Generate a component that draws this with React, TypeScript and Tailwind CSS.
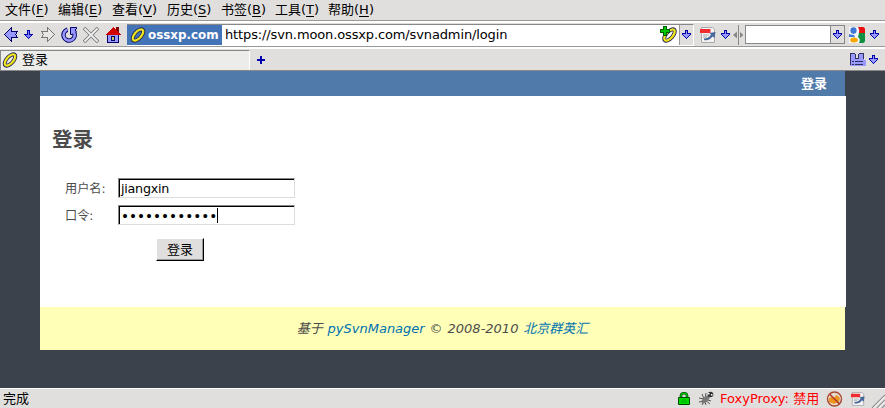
import React from 'react';

const chars = "font-['DejaVu_Sans','Noto_Sans_CJK_SC',sans-serif]";

function DownArrow() {
  return (
    <svg width="9" height="9" viewBox="0 0 9 9" shapeRendering="crispEdges">
      <path d="M3 0h3v3h3v2h-1v1h-1v1h-1v1h-1v1h-1v-1h-1v-1h-1v-1h-1v-1h-1v-2h3z" fill="#0000a8" />
      <path d="M4 1h1v3h3v1h-1v1h-1v1h-1v1h-1v-1h-1v-1h-1v-1h-1v-1h3z" fill="#9999ff" />
    </svg>
  );
}

function SmallArrow() {
  return (
    <svg width="9" height="9" viewBox="0 0 9 9" shapeRendering="crispEdges">
      <path d="M3 0h3v4h3v1h-1v1h-1v1h-1v1h-1v1h-1v-1h-1v-1h-1v-1h-1v-1h-1v-1h3z" fill="#0000a8" />
      <path d="M4 1h1v4h2v1h-1v1h-1v1h-1v-1h-1v-1h-1v-1h2z" fill="#8080ff" />
    </svg>
  );
}

function Ring() {
  return (
    <svg width="16" height="16" viewBox="0 0 16 16">
      <g transform="rotate(-48 8 8)" fill="none">
        <ellipse cx="8" cy="8" rx="7" ry="3.3" stroke="#20205a" strokeWidth="3.9" />
        <ellipse cx="8" cy="8" rx="7" ry="3.3" stroke="#e6dc00" strokeWidth="2.3" />
        <ellipse cx="8" cy="7.6" rx="6.8" ry="3.2" stroke="#ffff80" strokeWidth="0.5" />
      </g>
    </svg>
  );
}

function Back() {
  return (
    <svg width="15" height="15" viewBox="0 0 15 15" shapeRendering="crispEdges">
      <path d="M.5 7.5L7.5.5V4.5H13.5L11.5 7.5L13.5 10.5H7.5V14.5Z" fill="#9999ff" stroke="#000066" />
    </svg>
  );
}

function Forward() {
  return (
    <svg width="15" height="15" viewBox="0 0 15 15" shapeRendering="crispEdges">
      <path d="M14.5 7.5L7.5.5V4.5H1.5L3.5 7.5L1.5 10.5H7.5V14.5Z" fill="#e8e6e4" stroke="#777" />
    </svg>
  );
}

function Reload() {
  return (
    <svg width="17" height="16" viewBox="0 0 17 16">
      <path d="M6.5 2.6A5.6 5.6 0 1 0 13 5.3" fill="none" stroke="#000066" strokeWidth="4.4" />
      <path d="M9.5 .5H15.5V2L14 3L15.5 5L11 7.5H9.5Z" fill="#9999ff" stroke="#000066" />
      <path d="M6.2 2.7A5.6 5.6 0 1 0 13.2 5.6L12.5 4" fill="none" stroke="#9999ff" strokeWidth="2.5" />
    </svg>
  );
}

function Stop() {
  return (
    <svg width="16" height="16" viewBox="0 0 16 16">
      <path d="M1 1L15 15M15 1L1 15" stroke="#757575" strokeWidth="3.5" />
      <path d="M1.5 1.5L14.5 14.5M14.5 1.5L1.5 14.5" stroke="#eee" strokeWidth="1.8" />
    </svg>
  );
}

function Home() {
  return (
    <svg width="16" height="16" viewBox="0 0 16 16" shapeRendering="crispEdges">
      <path d="M2.5 7V15.5H13.5V7" fill="#9999ff" stroke="#000066" />
      <path d="M11 0h3v6h-3z" fill="#800000" />
      <path d="M8 0L16 8H0Z" fill="#d00000" />
      <path d="M6.5 9.5h3v4h-3z" fill="#c8c860" stroke="#000066" />
    </svg>
  );
}

function PdfIcon({ size = 16 }: { size?: number }) {
  return (
    <svg width={size} height={size} viewBox="0 0 16 16">
      <path d="M1.5.5h11l2 2v13h-13z" fill="#f3f3f3" stroke="#aaa" />
      <path d="M0 2h10.5v4H0z" fill="#f02c30" />
      <path d="M3 8h6M3 10h4" stroke="#aaa" />
      <path d="M4 11.5q5 0 7-4l-1.500-1.500 6-1-1 6-2-1.500q-3 4.500-8.500 3.500z" fill="#48689c" />
    </svg>
  );
}

function AddRing() {
  return (
    <svg width="17" height="17" viewBox="0 0 17 17">
      <g transform="translate(1.5 1)"><Ring /></g>
      <path d="M3.5.5h3v3h3v3h-3v3h-3v-3h-3v-3h3z" fill="#00c800" stroke="#006000" shapeRendering="crispEdges" />
    </svg>
  );
}

function GoogleIcon() {
  return (
    <svg width="16" height="16" viewBox="0 0 16 16">
      <path d="M0 0h16v16H0z" fill="#f4f6fa" />
      <path d="M9 0h5q2 0 2 2v4h-6q1-3-1-6z" fill="#e81010" />
      <path d="M10 6h6v8q0 2-2 2h-4q2-4-1-6z" fill="#109040" />
      <path d="M0 10V7q3 1 5 1l1 2z" fill="#4478d8" />
      <ellipse cx="4.5" cy="3.6" rx="3.1" ry="3.3" fill="#3f78d4" />
      <ellipse cx="5" cy="13" rx="3.8" ry="2.5" fill="#f8a800" />
    </svg>
  );
}

function Bookmarks() {
  return (
    <svg width="16" height="13" viewBox="0 0 16 13" shapeRendering="crispEdges">
      <path d="M0 1h5v5h4V1h5v6h2v6H0z" fill="#9999ff" />
      <path d="M.5 12V.5h4l1 1v4h3v-4l1-1h4V6" fill="none" stroke="#30305c" />
      <path d="M2 8h2v1H2zM5 8h8v1H5zM2 11h2v1H2zM5 11h8v1H5z" fill="#30305c" />
    </svg>
  );
}

function LockIcon() {
  return (
    <svg width="12" height="13" viewBox="0 0 12 13">
      <path d="M3 6V3.5Q3 1.3 6 1.3t3 2.2V6" fill="none" stroke="#004400" strokeWidth="2.6" />
      <path d="M3 6V3.5Q3 1.3 6 1.3t3 2.2V6" fill="none" stroke="#00d000" strokeWidth="1.2" />
      <path d="M.5 5.5h11v7H.5z" fill="#00dc00" stroke="#004400" />
      <path d="M3 8h6M3 10h6" stroke="#00b000" />
    </svg>
  );
}

function Bug() {
  return (
    <svg width="16" height="16" viewBox="0 0 16 16">
      <path d="M4 3l2 5 6 5M8 2l-1 6 6 2M1 7l5 1 2 6M1 11l5-1M4 14l2-4" stroke="#555" fill="none" />
      <ellipse cx="7.5" cy="8.5" rx="5" ry="2.4" transform="rotate(-45 7.5 8.5)" fill="#777" />
      <circle cx="12.5" cy="3.5" r="2.8" fill="#333" />
      <path d="M10 2h1.500v1.500H10zM13 3h1.500v1.500h-1.500z" fill="#fff" />
    </svg>
  );
}

function Blocked() {
  return (
    <svg width="17" height="16" viewBox="0 0 17 16">
      <circle cx="8.5" cy="8" r="7" fill="#e5ded0" stroke="#a84830" strokeWidth="1.4" />
      <path d="M3 7l2-1 3 1 2-3 2 1 2 2-1 4-5 2-5-2z" fill="#ed9420" />
      <path d="M3.5 3l10 10" stroke="#b03020" strokeWidth="1.4" />
    </svg>
  );
}

function Grip() {
  return (
    <svg width="14" height="14" viewBox="0 0 14 14">
      <path d="M1 14L14 1M6 14L14 6M11 14L14 11" stroke="#909090" strokeWidth="1.2" />
      <path d="M2.5 14L14 2.5M7.5 14L14 7.5" stroke="#fff" />
    </svg>
  );
}

const menus = [
  { label: '文件', accel: 'F', width: 'w-[53px]' },
  { label: '编辑', accel: 'E', width: 'w-[54px]' },
  { label: '查看', accel: 'V', width: 'w-[55px]' },
  { label: '历史', accel: 'S', width: 'w-[54px]' },
  { label: '书签', accel: 'B', width: 'w-[54px]' },
  { label: '工具', accel: 'T', width: 'w-[53px]' },
  { label: '帮助', accel: 'H', width: 'w-[54px]' },
];

export default function App() {
  return (
    <div className={`flex h-[408px] w-[885px] flex-col overflow-hidden bg-[#3b424b] text-[13px] leading-[18px] text-black ${chars}`}>
      <nav className="flex h-[21px] shrink-0 border-b border-[#999] bg-[#e0dfde] pl-[5px]">
        {menus.map((m) => (
          <span key={m.accel} className={`${m.width} shrink-0 text-[13px] leading-[19px] whitespace-nowrap`}>
            {m.label}(<span className="underline underline-offset-2">{m.accel}</span>)
          </span>
        ))}
      </nav>
      <div className="flex h-[26px] shrink-0 items-center border-t-2 border-b border-t-white border-b-[#999] bg-[#e0dfde]">
        <div className="flex w-[127px] shrink-0 items-center pl-[4px]">
          <Back /><span className="ml-[5px]"><SmallArrow /></span><span className="ml-[7px]"><Forward /></span>
          <span className="ml-[6px]"><Reload /></span><span className="ml-[5px]"><Stop /></span><span className="ml-[6px]"><Home /></span>
        </div>
        <div className="flex h-[22px] w-[567px] shrink-0 items-center border-t border-r border-b border-t-[#888] border-r-white border-b-white bg-white">
          <div className="flex h-[20px] w-[95px] shrink-0 items-center bg-[#4474b8] pl-[3px] text-[11.9px] font-bold text-white">
            <Ring /><span className="ml-[2px]">ossxp.com</span>
          </div>
          <span className="ml-[3px] w-[435px] shrink-0 text-[13px] tracking-[-0.13px]">https://svn.moon.ossxp.com/svnadmin/login</span>
          <AddRing />
          <div className="ml-[2px] flex h-[20px] flex-1 items-center justify-center border-l border-[#999] bg-[#e0dfde]"><DownArrow /></div>
        </div>
        <span className="ml-[6px]"><PdfIcon /></span><span className="ml-[5px]"><DownArrow /></span>
        <svg className="ml-[3px]" width="10" height="20" viewBox="0 0 10 20"><path d="M5.5 0v20" stroke="#888" /><path d="M0 10l4-3.5v7zM10.5 10l-3.5-3v6z" fill="#888" /></svg>
        <div className="ml-[2px] flex h-[19px] w-[100px] justify-end border border-[#888] bg-white"><div className="flex w-[14px] items-center justify-center border-l border-[#888] bg-[#e0dfde]"><DownArrow /></div></div>
        <span className="ml-[4px]"><GoogleIcon /></span><span className="ml-[5px]"><DownArrow /></span>
      </div>
      <div className="flex h-[24px] shrink-0 items-center border-t-2 border-b border-t-white border-b-[#888] bg-[#e0dfde]">
        <div className="flex h-[20px] w-[250px] items-center border-t border-r border-l border-t-[#888] border-r-white border-l-[#888] bg-[#ececeb] pl-[1px]"><Ring /><span className="ml-[4px]">登录</span></div>
        <svg className="ml-[7px]" width="8" height="8"><path d="M0 4h8M4 0v8" stroke="#0000b0" strokeWidth="2" /></svg>
        <span className="ml-auto"><Bookmarks /></span><span className="mr-[7px] ml-[3px] pb-px"><DownArrow /></span>
      </div>
      <main className="flex h-[317px] shrink-0 flex-col px-[40px]">
        <header className="flex h-[25px] w-[805px] items-center justify-end bg-[#507aaa] pr-[18px] font-bold text-white">登录</header>
        <section className="h-[211px] w-[806px] bg-white pt-[30px] pl-[12px] text-[#4c4c4c]">
          <h1 className="h-[52px] text-[20.5px] leading-[28px] font-bold">登录</h1>
          <div className="flex h-[27px] pl-[13px] text-[12.2px]">
            <label className="w-[53px] leading-[22px]">用户名:</label>
            <div className="h-[20px] w-[177px] border border-t-[#888] border-r-[#ddd] border-b-[#ddd] border-l-[#888] bg-white text-black">
              <div className="h-[18px] border-t border-l border-black pl-px text-[12.7px] leading-[18px] tracking-[-0.24px]">jiangxin</div>
            </div>
          </div>
          <div className="flex h-[27px] pl-[13px] text-[12.2px]">
            <label className="w-[53px] leading-[22px]">口令:</label>
            <div className="h-[20px] w-[177px] border border-t-[#888] border-r-[#ddd] border-b-[#ddd] border-l-[#888] bg-white text-black">
              <div className="flex h-[18px] items-center border-t border-l border-black pl-[1px]">
                <span className="text-[13.6px] leading-[16px]">••••••••••••</span><i className="h-[15px] w-px bg-black" />
              </div>
            </div>
          </div>
          <button className="mt-[6px] ml-[104px] block h-[23px] w-[48px] border border-t-white border-r-black border-b-black border-l-white bg-[#e0dfde] text-black shadow-[inset_-1px_-1px_0_#999]">登录</button>
        </section>
        <footer className="h-[43px] w-[805px] bg-[#ffffb8] text-center text-[13px] leading-[44px] text-[#4c4c4c] italic [word-spacing:0.8px]">
          基于 <a className="text-[#0072b0]">pySvnManager</a> © 2008-2010 <a className="text-[#0072b0]">北京群英汇</a>
        </footer>
      </main>
      <div className="flex h-[20px] shrink-0 items-center border-t border-white bg-[#e0dfde] pl-[3px]">
        <span className="w-[675px]">完成</span><LockIcon /><span className="ml-[8px]"><Bug /></span>
        <span className="ml-[6px] w-[106px] whitespace-nowrap text-[#ff0000]">FoxyProxy: 禁用</span>
        <Blocked /><span className="ml-[8px]"><PdfIcon size={14} /></span>
        <span className="ml-auto self-end"><Grip /></span>
      </div>
    </div>
  );
}
